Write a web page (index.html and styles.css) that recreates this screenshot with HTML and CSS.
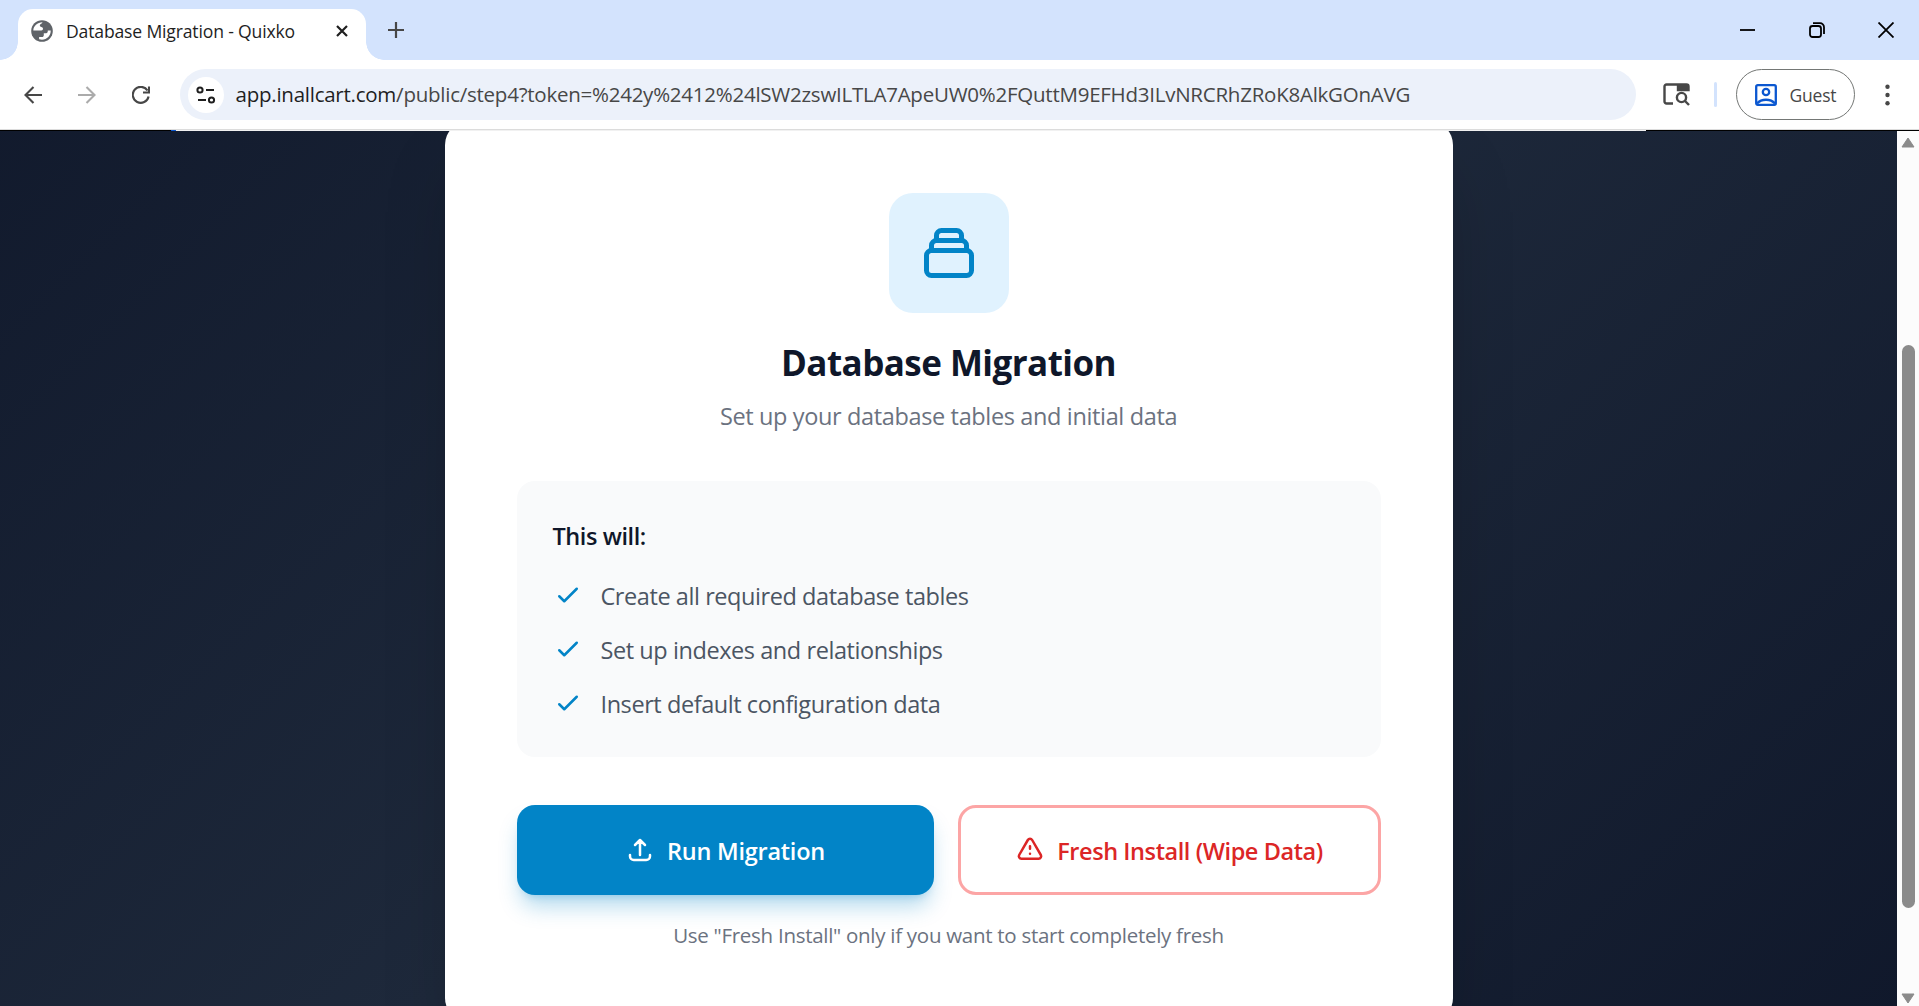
FILE: index.html
```html
<!DOCTYPE html>
<html lang="en">
<head>
  <meta charset="UTF-8">
  <meta name="viewport" content="width=device-width, initial-scale=1.0">
  <title>Database Migration - Quixko</title>
  <link rel="stylesheet" href="styles.css">
</head>

<body>

  <div class="tab-strip">
    <div class="tab">
      <svg class="favicon" viewBox="0 0 22 22">
        <circle cx="11" cy="11" r="10.8" fill="#5f6368"/>
        <path d="M11.500 2.300c-.2 1.600-2.700 1.500-2.700 3.200 0 1.900 3.200 1.200 3.200 3.200 0 1.500-1.400 1.900-2.800 1.900H2.300C2.500 6 6.300 2.300 11.500 2.300z" fill="#fff"/>
        <path d="M19.700 10.500c.3 5-3.700 9.200-8.700 9.200-1 0-2-.2-2.900-.5v-2.100h2.700c1.500 0 2-1 2-2.200v-1.700h2.300c1.300 0 1.700-.8 1.700-2.700z" fill="#fff"/>
      </svg>
      <span class="tab-title">Database Migration - Quixko</span>
      <svg class="tab-close" viewBox="0 0 12 12"><path d="M1 1l10 10M11 1L1 11"/></svg>
    </div>
    <svg class="new-tab" viewBox="0 0 16 16"><path d="M8 0v16M0 8h16"/></svg>
    <div class="window-controls">
      <svg viewBox="0 0 16 16"><path d="M0 8h15"/></svg>
      <svg viewBox="0 0 16 16"><rect x="1" y="4" width="11" height="11" rx="2.500"/><path d="M4 1.200h7a4 4 0 0 1 4 4V12"/></svg>
      <svg viewBox="0 0 16 16"><path d="M.5.5l15 15M15.500.5l-15 15"/></svg>
    </div>
  </div>

  <div class="toolbar">
    <svg class="nav-icon" viewBox="0 0 18 18"><path d="M18 9H2M9.500 1L1.500 9l8 8"/></svg>
    <svg class="nav-icon disabled" viewBox="0 0 18 18"><path d="M0 9h16M8.500 1l8 8-8 8"/></svg>
    <svg class="nav-icon" viewBox="0 0 18 18"><path d="M16.600 10.500A8 8 0 1 1 15.500 4.500M17 .5v6h-6"/></svg>
    <div class="address-bar">
      <span class="site-info">
        <svg viewBox="0 0 20 18"><circle cx="4" cy="4" r="2.600"/><path d="M10 4h8M2 14h8"/><circle cx="15.500" cy="14" r="2.600"/></svg>
      </span>
      <span class="url"><b>app.inallcart.com</b>/public/step4?token=%242y%2412%24lSW2zswILTLA7ApeUW0%2FQuttM9EFHd3ILvNRCRhZRoK8AlkGOnAVG</span>
    </div>
    <svg class="lens" viewBox="0 0 27 23">
      <path d="M10 20.500H3.500a2 2 0 0 1-2-2v-15a2 2 0 0 1 2-2h20a2 2 0 0 1 2 2V7H15V1.500" />
      <path class="fill" d="M14.500 1H26v7H14.500z"/>
      <circle cx="18.500" cy="14.500" r="4.600"/><path d="M22 18l4 4"/>
    </svg>
    <span class="divider"></span>
    <div class="profile">
      <svg viewBox="0 0 22 22"><rect x="1.200" y="1.200" width="19.600" height="19.600" rx="1.500"/><circle cx="11" cy="8" r="3.200"/><path d="M2 19.500c4.500-5 13.500-5 18 0"/></svg>
      <span>Guest</span>
    </div>
    <svg class="menu" viewBox="0 0 5 22"><circle cx="2.500" cy="2.700" r="2.200"/><circle cx="2.500" cy="11" r="2.200"/><circle cx="2.500" cy="19.300" r="2.200"/></svg>
  </div>
  <div class="edge"><span class="edge-dark"></span><span class="edge-blue"></span><span class="edge-light"></span></div>

  <div class="viewport">
    <main class="page">
      <div class="card">
        <div class="card-icon">
          <svg class="icon" viewBox="0 0 24 24"><path d="M19 11H5m14 0a2 2 0 012 2v6a2 2 0 01-2 2H5a2 2 0 01-2-2v-6a2 2 0 012-2m14 0V9a2 2 0 00-2-2M5 11V9a2 2 0 012-2m0 0V5a2 2 0 012-2h6a2 2 0 012 2v2M7 7h10"/></svg>
        </div>
        <h1>Database Migration</h1>
        <p class="subtitle">Set up your database tables and initial data</p>

        <div class="info">
          <h2>This will:</h2>
          <ul>
            <li><svg class="icon" viewBox="0 0 24 24"><path d="M5 13l4 4L19 7"/></svg><span>Create all required database tables</span></li>
            <li><svg class="icon" viewBox="0 0 24 24"><path d="M5 13l4 4L19 7"/></svg><span>Set up indexes and relationships</span></li>
            <li><svg class="icon" viewBox="0 0 24 24"><path d="M5 13l4 4L19 7"/></svg><span>Insert default configuration data</span></li>
          </ul>
        </div>

        <div class="actions">
          <button class="btn btn-primary">
            <svg class="icon" viewBox="0 0 24 24"><path d="M4 16v1a3 3 0 003 3h10a3 3 0 003-3v-1m-4-8l-4-4m0 0L8 8m4-4v12"/></svg>
            <span>Run Migration</span>
          </button>
          <button class="btn btn-danger">
            <svg class="icon" viewBox="0 0 24 24"><path d="M12 9v2m0 4h.01m-6.938 4h13.856c1.540 0 2.502-1.667 1.732-3L13.732 4c-.77-1.333-2.694-1.333-3.464 0L3.340 16c-.77 1.333.192 3 1.732 3z"/></svg>
            <span>Fresh Install (Wipe Data)</span>
          </button>
        </div>
        <p class="note">Use "Fresh Install" only if you want to start completely fresh</p>
      </div>
    </main>
    <div class="scrollbar">
      <svg viewBox="0 0 14 11"><path d="M7 1L13 10H1z"/></svg>
      <div class="thumb"></div>
      <svg viewBox="0 0 14 11"><path d="M7 10L13 1H1z"/></svg>
    </div>
  </div>

</body>
</html>
```
FILE: styles.css
```css
* {
  box-sizing: border-box;
}

body {
  margin: 0;
  height: 1006px;
  overflow: hidden;
  display: flex;
  flex-direction: column;
  font-family: "Open Sans", "Noto Sans", sans-serif;
  background: #fff;
}

h1, h2, p, ul {
  margin: 0;
  padding: 0;
}

svg {
  display: block;
  flex: none;
  fill: none;
}

/* browser window */
.tab-strip {
  display: flex;
  align-items: flex-start;
  flex: none;
  height: 60px;
  padding-left: 18px;
  background: #d3e3fd;
}

.tab {
  display: flex;
  align-items: center;
  position: relative;
  width: 348px;
  height: 51px;
  margin-top: 9px;
  padding: 0 18px 8px 13px;
  background: #fff;
  border-radius: 15px 15px 0 0;
}

.tab::before, .tab::after {
  content: "";
  position: absolute;
  bottom: 0;
  width: 18px;
  height: 18px;
}

.tab::before {
  left: -18px;
  background: radial-gradient(circle at 0 0, #d3e3fd 17.5px, #fff 18px);
}

.tab::after {
  right: -18px;
  background: radial-gradient(circle at 100% 0, #d3e3fd 17.5px, #fff 18px);
}

.favicon {
  width: 22px;
  height: 22px;
}

.tab-title {
  margin: 1px auto 0 13px;
  font-size: 17.6px;
  letter-spacing: -0.17px;
  color: #1f1f1f;
}

.tab-close {
  width: 12px;
  height: 12px;
  stroke: #1f1f1f;
  stroke-width: 2.2;
}

.new-tab {
  width: 16px;
  height: 16px;
  margin: 22px 0 0 22px;
  stroke: #474747;
  stroke-width: 2.2;
}

.window-controls {
  display: flex;
  gap: 53px;
  margin: 21.5px 25.5px 0 auto;
}

.window-controls svg {
  width: 16px;
  height: 16px;
  stroke: #000;
  stroke-width: 1.8;
}

.toolbar {
  display: flex;
  align-items: center;
  flex: none;
  height: 69px;
  padding-left: 24px;
}

.nav-icon {
  width: 18px;
  height: 18px;
  margin-right: 36px;
  stroke: #474747;
  stroke-width: 2.1;
}

.nav-icon.disabled {
  stroke: #ababab;
}

.address-bar {
  display: flex;
  align-items: center;
  width: 1456px;
  height: 51px;
  margin-left: -6px;
  padding-left: 8px;
  border-radius: 26px;
  background: #ecf1fa;
}

.site-info {
  display: flex;
  align-items: center;
  justify-content: center;
  width: 36px;
  height: 36px;
  border-radius: 50%;
  background: #fff;
}

.site-info svg {
  width: 20px;
  height: 18px;
  stroke: #1f1f1f;
  stroke-width: 2;
}

.url {
  margin-left: 11.5px;
  padding-bottom: 2px;
  font-size: 20.5px;
  letter-spacing: -0.245px;
  white-space: nowrap;
  color: #474747;
}

.url b {
  font-weight: 400;
  color: #1f1f1f;
}

.lens {
  width: 27px;
  height: 23px;
  margin-left: 27px;
  stroke: #474747;
  stroke-width: 2.4;
}

.lens .fill {
  fill: #474747;
  stroke: none;
}

.divider {
  width: 3px;
  height: 25px;
  margin-left: 24px;
  border-radius: 2px;
  background: #d3e3fd;
}

.profile {
  display: flex;
  align-items: center;
  gap: 13px;
  width: 119px;
  height: 51px;
  margin-left: 18.5px;
  padding-left: 18px;
  border: 1.5px solid #747775;
  border-radius: 26px;
  font-size: 17.5px;
  letter-spacing: -0.2px;
  color: #474747;
}

.profile svg {
  width: 22px;
  height: 22px;
  stroke: #0b57d0;
  stroke-width: 2.3;
}

.menu {
  width: 5px;
  height: 22px;
  margin-left: 30px;
  fill: #474747;
}

.edge {
  display: flex;
  flex: none;
  height: 2px;
  border-top: 1px solid #dcdcdc;
  background: #000;
}

.edge-dark {
  width: 171px;
}

.edge-blue {
  width: 5px;
  background: #0b57d0;
}

.edge-light {
  width: 1470px;
  background: #f1f1f1;
}

/* installer page */
.viewport {
  display: flex;
  flex: 1;
  min-height: 0;
}

.page {
  flex: 1;
  display: flex;
  justify-content: center;
  align-items: flex-start;
  overflow: hidden;
  background: linear-gradient(135deg, #0f172a 0%, #1e293b 50%, #0f172a 100%) 0 -298px / 100% 1296px;
}

.card {
  width: 1008px;
  margin-top: -10px;
  padding: 72px;
  border-radius: 24px;
  background: #fff;
  box-shadow: 0 37.5px 75px -18px rgba(0, 0, 0, 0.25);
  text-align: center;
}

.icon {
  width: 30px;
  height: 30px;
  stroke: currentColor;
  stroke-width: 2;
  stroke-linecap: round;
  stroke-linejoin: round;
}

.card-icon {
  display: flex;
  align-items: center;
  justify-content: center;
  width: 120px;
  height: 120px;
  margin: 0 auto 24px;
  border-radius: 24px;
  background: #e0f2fe;
  color: #0284c7;
}

.card-icon .icon {
  width: 60px;
  height: 60px;
}

h1 {
  margin-bottom: 9px;
  font-size: 35px;
  font-weight: 700;
  letter-spacing: -0.55px;
  line-height: 52px;
  color: #0f172a;
}

.subtitle {
  margin-bottom: 47px;
  font-size: 23.5px;
  letter-spacing: -0.36px;
  line-height: 36px;
  color: #6b7280;
}

.info {
  margin-bottom: 48px;
  padding: 37px 36px 36px;
  border-radius: 18px;
  background: #f9fafb;
  text-align: left;
}

.info h2 {
  margin-bottom: 23px;
  font-size: 23.5px;
  font-weight: 600;
  letter-spacing: -0.42px;
  line-height: 36px;
  color: #0f172a;
}

.info ul {
  display: grid;
  gap: 18px;
  list-style: none;
}

.info li {
  display: flex;
  align-items: center;
  gap: 18px;
  height: 36px;
  font-size: 23.5px;
  letter-spacing: -0.43px;
  line-height: 36px;
  color: #4b5563;
}

.info li span {
  padding-top: 2px;
}

.info .icon {
  color: #0284c7;
}

.actions {
  display: grid;
  grid-template-columns: 417px 423px;
  gap: 24px;
  margin-bottom: 25px;
}

.btn {
  display: flex;
  align-items: center;
  justify-content: center;
  gap: 12px;
  height: 90px;
  border: 0;
  border-radius: 18px;
  font-family: inherit;
  font-size: 23.5px;
  font-weight: 600;
  letter-spacing: -0.25px;
  line-height: 36px;
}

.btn span {
  padding-top: 2px;
}

.btn-primary {
  background: #0284c7;
  color: #fff;
  box-shadow: 0 15px 22px -4px rgba(2, 132, 199, 0.3), 0 6px 9px -6px rgba(2, 132, 199, 0.3);
}

.btn-danger {
  border: 3px solid #fca5a5;
  background: #fff;
  color: #dc2626;
  letter-spacing: -0.42px;
}

.note {
  font-size: 20.5px;
  letter-spacing: -0.28px;
  line-height: 30px;
  color: #6b7280;
}

/* scrollbar */
.scrollbar {
  display: flex;
  flex-direction: column;
  align-items: center;
  width: 22px;
  padding: 6px 0 2px;
  background: #fcfcfc;
}

.scrollbar svg {
  width: 14px;
  height: 11px;
  fill: #8b8b8b;
  stroke: #8b8b8b;
  stroke-linejoin: round;
}

.thumb {
  width: 13px;
  height: 563px;
  margin: 197px 0 auto;
  border-radius: 7px;
  background: #8b8b8b;
}
```
